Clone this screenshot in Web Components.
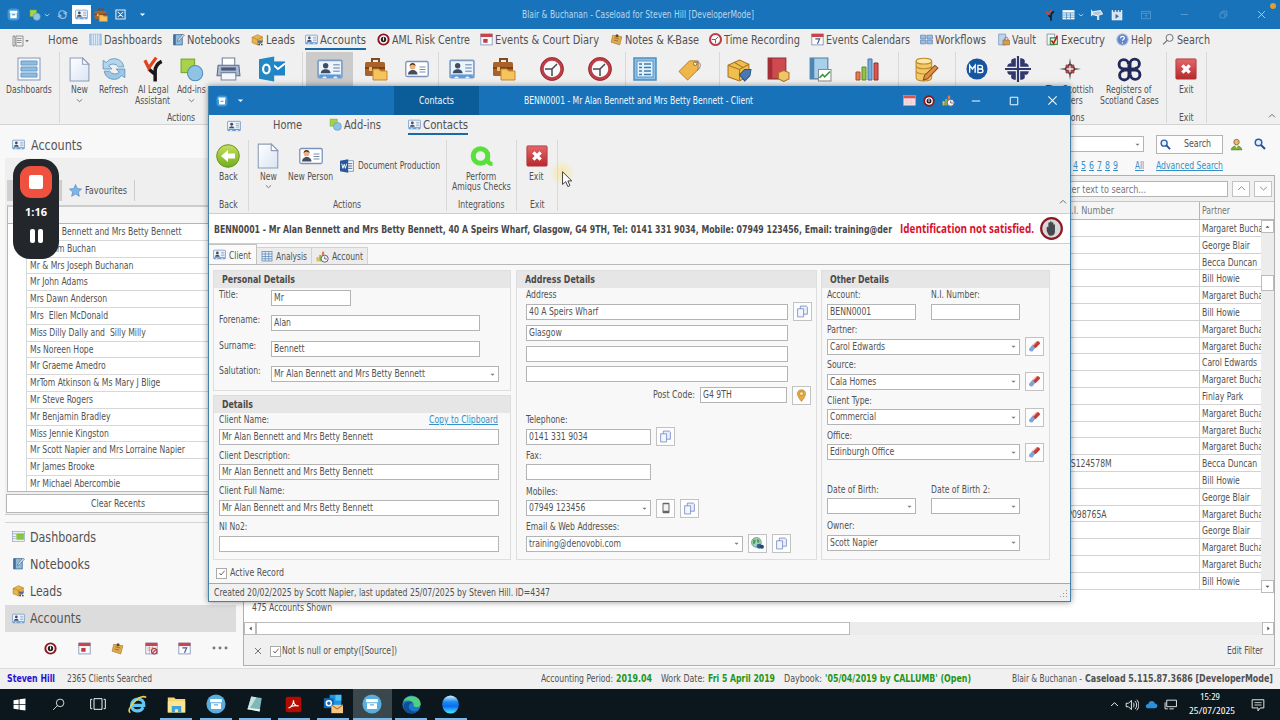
<!DOCTYPE html>
<html lang="en">
<head>
<meta charset="utf-8">
<title>Caseload</title>
<style>
    html, body {
        margin: 0;
        width: 1280px;
        height: 720px;
        overflow: hidden;
    }
    body {
        font-family: "DejaVu Sans Condensed", "DejaVu Sans", sans-serif;
        font-stretch: condensed;
        font-size: 10.2px;
        line-height: 12px;
        color: #525252;
    }
</style>
</head>
<body>
<case-desktop></case-desktop>

<script>
// ---------- icons, all on a 24x24 grid ----------
const card = '<rect x="1" y="4" width="22" height="16" rx="1" fill="#eef4fb" stroke="#7d9cc4" stroke-width="1.5"/><path d="M2 17h20v3H2z" fill="#5c9bd8"/><path d="M5 20.500c0-2 4-2 4 0M15 20.500c0-2 4-2 4 0" fill="#eef4fb"/><circle cx="8" cy="9" r="2.5" fill="#3f4d66"/><path d="M3.5 16c0-5 9-5 9 0z" fill="#3f4d66"/><path d="M15 8h6M15 11h6M15 14h6" stroke="#8ea5c4" stroke-width="1.4"/>';
const clock = '<circle cx="12" cy="12" r="10" fill="#f7f8fa" stroke="#bf3e47" stroke-width="3.4"/><circle cx="12" cy="12" r="11.4" fill="none" stroke="#8d2830" stroke-width=".8"/><path d="M12 12l5-5M12 12H5M12 12v7" stroke="#4a4a4a" stroke-width="1.5"/>';
const calendar = '<rect x="1.5" y="2" width="21" height="20" fill="#fbfbfd" stroke="#7f8fb5" stroke-width="1.5"/><path d="M1 1.500h22v6H1z" fill="#c8464b"/>';
const target = '<circle cx="12" cy="12" r="9.500" fill="#fff" stroke="#8f1620" stroke-width="3.600"/><circle cx="12" cy="12" r="5" fill="#222"/><path d="M12 8v6" stroke="#eee" stroke-width="2"/>';
const brief = '<path d="M8 5V2h7v3" fill="none" stroke="#7d4a24" stroke-width="2"/><rect x="1" y="5" width="20" height="14" rx="1.500" fill="#a9622a"/><path d="M1 11h20" stroke="#6b3a15" stroke-width="1.500"/><path d="M5 10h3v4H5z" fill="#e8c070"/><path d="M9 12h6l1.500 2H23v9H9z" fill="#f6c35c" stroke="#c8862c"/>';
const shapes = '<rect x="2" y="2" width="13" height="13" fill="#a8d24c" stroke="#74a428"/><circle cx="15.500" cy="15.500" r="7.300" fill="#8fc3e6" stroke="#4d8cb8"/>';
const app = '<rect x="1" y="1" width="22" height="22" rx="7" fill="#3d97d8"/><path d="M5 5h14v5H5z" fill="#fff"/><path d="M6 10h12v9H6z" fill="#fff"/><path d="M9 12.500h6" stroke="#2a86cc" stroke-width="1.800"/>';
const leads = '<path d="M2 8l10-5 9 4v10l-9 5-10-4z" fill="#e9b549" stroke="#a87420"/><path d="M2 8l10 4 9-5M12 12v9" fill="none" stroke="#a87420"/><path d="M12 14h10l-2 5h-6z" fill="#4d72a8"/><circle cx="15" cy="21.500" r="1.500" fill="#333"/><circle cx="20" cy="21.500" r="1.500" fill="#333"/>';
const notebook = '<path d="M3 3h16v19H3z" fill="#8dbcdc" stroke="#3c6c96" stroke-width="1.500"/><path d="M3 3h4v19H3z" fill="#3f6f9a"/><path d="M10 16l1-4 9-10 3 2-9 10z" fill="#cfdcea" stroke="#4b5a70"/>';
const pinnote = '<path d="M5 4l17 3-4 15-16-5z" fill="#e0ab4c" stroke="#9c6c24"/><path d="M8 9l9 2M7 13l8 2" stroke="#946628" stroke-width="1.500"/><circle cx="13" cy="5" r="2.800" fill="#6a4318"/>';
const exit = '<rect x="1" y="1" width="22" height="22" rx="1" fill="url(#red)" stroke="#b03a3c"/><path d="M8 8l8 8M16 8l-8 8" stroke="#fff" stroke-width="3.600"/>';
const page = '<path d="M3 1h12l6 6v16H3z" fill="url(#paper)" stroke="#8d9cb8"/><path d="M15 1v6h6z" fill="#fff" stroke="#8d9cb8"/>';
const person = '<rect x="0.800" y="4.500" width="22.400" height="15" rx="1.500" fill="#fff" stroke="#7a93bd" stroke-width="1.300"/><circle cx="7.500" cy="9.500" r="2.900" fill="#eeb27e"/><path d="M4.600 9c0-4 6-4 6 0-2-2-4-2-6 0z" fill="#503018"/><path d="M3 17.500c0-6 9.500-6 9.500 0z" fill="#444e60"/><path d="M14.500 10h6M14.500 12.500h6M14.500 15h6" stroke="#7b8da8"/>';
const lens = '<circle cx="9" cy="9" r="6.500" fill="#e8f1fb" stroke="#2b5fae" stroke-width="3"/><path d="M14 14l8 8" stroke="#214f9c" stroke-width="4"/>';

const ICONS = {
    card, clock, target, brief, shapes, app, leads, notebook, pinnote, exit, page, person, lens,
    diary: calendar + '<rect x="6" y="11" width="8" height="7" fill="#c03a44"/>',
    cal7: calendar + '<path d="M8 11h8l-4 9" fill="none" stroke="#4b5c80" stroke-width="2.200"/>',
    calplain: '<rect x="1" y="3" width="22" height="18" fill="#f7dfe0" stroke="#d8a0a4"/><path d="M1 3h22v5H1z" fill="#d95350"/><path d="M1 12.500h22M1 16.500h22M8 8v13M15 8v13" stroke="#e9c2c4"/>',
    calstop: calendar + '<path d="M4 11h16M4 15h16M8 8v13M14 8v13" stroke="#b86a70"/><circle cx="17" cy="17" r="5" fill="#f2dcdc" stroke="#a33640" stroke-width="2"/><path d="M14 20l6-6" stroke="#a33640" stroke-width="2"/>',
    back: '<circle cx="12" cy="12" r="11.300" fill="url(#green)" stroke="#6a9420"/><path d="M5 12l7-6v3.500h7v5h-7V18z" fill="#fff"/>',
    menu: '<path d="M2 2h4v20H2zM8 2h14v20H8z" fill="#eee" stroke="#777" stroke-width="1.500"/><path d="M10 7h9M10 11h9M10 15h9" stroke="#777" stroke-width="1.500"/>',
    cols: '<rect x="1.500" y="2" width="21" height="20" fill="#a9c8e8" stroke="#7ea1c8"/><path d="M6 2v20M10 2v20M14 2v20M18 2v20" stroke="#eef5fb" stroke-width="1.500"/>',
    dash: '<rect x="1" y="1" width="22" height="22" fill="#f5f7fa" stroke="#8797b3"/><path d="M4 4h16v4H4zM4 10h16v4H4zM4 16h16v4H4z" fill="#8fbbe0" stroke="#6b9cc8"/>',
    listblue: '<rect x="1" y="1" width="22" height="22" fill="#8cc0e6" stroke="#4e8fc0" stroke-width="1.500"/><rect x="4" y="4" width="16" height="16" fill="#e6f2fb" stroke="#5a98c8"/><path d="M6 7h3M6 10.500h3M6 14h3M6 17.500h3M11 7h7M11 10.500h7M11 14h7M11 17.500h7" stroke="#3f7cae" stroke-width="1.400"/>',
    refresh: '<path d="M3 14a9 9 0 0 0 16 4l3 2v-8h-8l3 3a6 6 0 0 1-9-1z" fill="#9cc7e6" stroke="#5b93bd" stroke-width=".8"/><path d="M21 10A9 9 0 0 0 5 6L2 4v8h8L7 9a6 6 0 0 1 9 1z" fill="#b3d6ee" stroke="#5b93bd" stroke-width=".8"/>',
    ai: '<path d="M20 5c-4 2-6 5-6 9v9.500M8 12l6 5" fill="none" stroke="#181818" stroke-width="3.200"/><path d="M4.500 4l3.500 7L15 1.500" fill="none" stroke="#e2431c" stroke-width="3"/>',
    printer: '<path d="M6 1h12v8H6z" fill="#fff" stroke="#6f7d98"/><path d="M2 8h20l1 10H1z" fill="#aab8d0" stroke="#5e6d8c"/><path d="M5 10h14v3H5z" fill="#4c5a78"/><path d="M5 15h14v7H5z" fill="#f4f7fb" stroke="#7887a2"/>',
    outlook: '<path d="M12 5h12v13H12z" fill="#1f83c8"/><path d="M13 8l4.500 4L24 7" fill="none" stroke="#fff" stroke-width="1.800"/><path d="M0 3l14-2.500v23L0 21z" fill="#2288c4"/><ellipse cx="6.800" cy="12" rx="3" ry="4" fill="none" stroke="#fff" stroke-width="2"/>',
    tag: '<path d="M1 14L12 3h9v9L10 23z" fill="#f0b64a" stroke="#b57a20"/><circle cx="18" cy="6" r="1.800" fill="#fff" stroke="#8c6424"/><path d="M18 5c6-3 7 5 2 8" fill="none" stroke="#777"/>',
    boxtag: '<path d="M1 8l11-5 9 4v11l-9 5-11-4z" fill="#f1bf4e" stroke="#a87420"/><path d="M1 8l11 4 9-5M12 12v10M7 5l8 5" fill="none" stroke="#a87420"/><path d="M12 17l5-5h6l-1 6-5 5z" fill="#4a78b4" stroke="#2e5688"/>',
    redbook: '<path d="M3 1h17v20H3z" fill="#cf4a50" stroke="#8f2a30"/><path d="M3 1h4v20H3z" fill="#a12f36"/><path d="M13 15l5-2 5 2v6l-5 2.500-5-2.500z" fill="#f2c46a" stroke="#a87420"/>',
    bluebook: '<path d="M3 1h17v20H3z" fill="#a9d0ea" stroke="#4a7ca4"/><path d="M3 1h4v20H3z" fill="#4a86b4"/><path d="M11 12h12v11H11z" fill="#fff" stroke="#888"/><path d="M12 20l3-3 2 2 5-5" fill="none" stroke="#3a9a3a" stroke-width="1.500"/>',
    chart: '<path d="M1 15h4v8H1z" fill="#e97a50" stroke="#b04a28"/><path d="M7 10h4v13H7z" fill="#8fc34a" stroke="#5c8a24"/><path d="M13 2h4v21h-4z" fill="#7aaede" stroke="#3f74a8"/><path d="M19 6h4v17h-4z" fill="#dc5450" stroke="#98302e"/>',
    db: '<path d="M2 4v16c0 4 15 4 15 0V4z" fill="#f3c866" stroke="#bb8a2c"/><ellipse cx="9.500" cy="4" rx="7.500" ry="2.800" fill="#fbe6a8" stroke="#bb8a2c"/><path d="M2 9c2 3 13 3 15 0M2 14c2 3 13 3 15 0" fill="none" stroke="#bb8a2c"/><path d="M9 22l1-4L20 8l3 2.500L13 21z" fill="#e09048" stroke="#8c4c1c"/>',
    mb: '<circle cx="12" cy="12" r="11.500" fill="#15569f"/><path d="M4 16V8l3 4 3-4v8M13 8v8h3.500a2 2 0 0 0 0-4H13h3a2 2 0 0 0 0-4z" fill="none" stroke="#fff" stroke-width="1.500"/>',
    cross: '<path d="M0 12h24M12 0v24" stroke="#32386e" stroke-width="2"/><g fill="#32386e"><path d="M10 10H2c0-3 3-4 4-3-1-3 0-5 4-5z"/><path d="M14 10h8c0-3-3-4-4-3 1-3 0-5-4-5z"/><path d="M10 14H2c0 3 3 4 4 3-1 3 0 5 4 5z"/><path d="M14 14h8c0 3-3 4-4 3 1 3 0 5-4 5z"/></g>',
    star8: '<path d="M12 1l1.300 9.700L23 12l-9.700 1.300L12 23l-1.300-9.700L1 12l9.700-1.300z" fill="#333"/><circle cx="12" cy="12" r="5" fill="#5c3436"/><path d="M8 8l8 8M16 8l-8 8" stroke="#b54548" stroke-width="2"/><path d="M12 8.500v7M8.500 12h7" stroke="#eee" stroke-width="1.300"/>',
    registers: '<g fill="none" stroke="#23285a" stroke-width="2.800"><path d="M11 7a4.500 4.500 0 1 0-4.500 4.500H17"/><path d="M17 11a4.500 4.500 0 1 0-4.500-4.500V17"/><path d="M13 17a4.500 4.500 0 1 0 4.500-4.500H7"/><path d="M7 13a4.500 4.500 0 1 0 4.500 4.500V7"/></g>',
    flow: '<path d="M1 4h10v7H1zM13 4h10v7H13zM1 13h10v7H1zM13 13h10v7H13z" fill="#9cbce0" stroke="#5f84b4" stroke-width="1.300"/>',
    vault: '<path d="M3 2h13v20H3z" fill="#bcd4ea" stroke="#6f93b8" stroke-width="1.300"/><rect x="11" y="13" width="12" height="9" fill="#d99a58" stroke="#8c5c28"/><path d="M14 13v-3c0-3 6-3 6 0v3" fill="none" stroke="#8c7050" stroke-width="1.600"/>',
    execu: '<path d="M2 2h14v20H2z" fill="#f3f7fa" stroke="#6d8090" stroke-width="1.400"/><path d="M8 9h13v12H8z" fill="#e6f3e2" stroke="#3d8a3d" stroke-width="2"/><path d="M10 14l4 5 7-14" fill="none" stroke="#b02028" stroke-width="3"/>',
    help: '<circle cx="12" cy="12" r="10.500" fill="#5f86cc" stroke="#b8c6de" stroke-width="2"/><path d="M8.500 9.500c0-5 7-4 7-.5 0 2.500-3.500 2.500-3.500 5.500M12 17v2.500" fill="none" stroke="#fff" stroke-width="2.200"/>',
    find: '<circle cx="14" cy="9" r="6.500" fill="none" stroke="#666" stroke-width="1.700"/><path d="M9.500 13.500L2 21" stroke="#666" stroke-width="2"/>',
    findw: '<circle cx="15" cy="9" r="7" fill="none" stroke="#fff" stroke-width="1.500"/><path d="M10 14l-8 8" stroke="#fff" stroke-width="1.500"/>',
    fav: '<path d="M12 1l3.300 7.500 8 .8-6 5.400 1.800 8L12 18.600 4.900 22.700l1.800-8-6-5.400 8-.8z" fill="#7fb6e6" stroke="#3d78b4"/>',
    greendash: '<rect x="1" y="3" width="22" height="18" fill="#eef3f8" stroke="#7a8ca8"/><path d="M8 7h14v11H8z" fill="#8ac53f"/><path d="M1 7h22M1 12h6M1 16h6" stroke="#7a8ca8"/>',
    user: '<circle cx="12" cy="7.500" r="5" fill="#edb77c" stroke="#8c5c24" stroke-width="1.500"/><path d="M2 22c1-10 19-10 20 0z" fill="#78b034" stroke="#4c7c1c"/><path d="M9 14l3 5 3-5z" fill="#eee"/>',
    word: '<path d="M10 3h13v18H10z" fill="#fff" stroke="#2b5797"/><path d="M14 8h7M14 12h7M14 16h7" stroke="#2b5797" stroke-width="1.500"/><path d="M0 3l14-2.500v23L0 21z" fill="#2b579a"/><path d="M3 8l2 8 2.200-7L9.300 16l2-8" fill="none" stroke="#fff" stroke-width="1.600"/>',
    amiqus: '<circle cx="10.500" cy="12" r="7.300" fill="none" stroke="#58e03c" stroke-width="5"/><path d="M18 8v8c0 3 2 4 4.500 4" fill="none" stroke="#58e03c" stroke-width="4"/>',
    hand: '<circle cx="12" cy="12" r="10.800" fill="#d6d8da" stroke="#8c1822" stroke-width="2.300"/><path d="M7 11c0-1 1.500-1 1.700 0V6.500c0-1.300 1.700-1.300 1.700 0V5.300c0-1.300 1.800-1.300 1.800 0v1.200c0-1.300 1.800-1.300 1.800 0v2c0-1.200 1.600-1.200 1.600 0V15c0 3-2 4.500-4 4.500-3 0-3-2-4.600-5z" fill="#45484c"/>',
    sheet: '<rect x="2" y="3" width="20" height="19" fill="#e8f1fb" stroke="#5d86ba" stroke-width="1.500"/><path d="M2 8h20M2 13h20M2 17.500h20M8.500 3v19M15.500 3v19" stroke="#5d86ba" stroke-width="1.500"/>',
    acclock: '<path d="M1 13h4v8H1z" fill="#e2b93c"/><path d="M6 9h4v12H6z" fill="#8aba42"/><path d="M11 3h4v18h-4z" fill="#e27c50"/><circle cx="16" cy="16" r="6.500" fill="#f4f4fa" stroke="#6c5a86" stroke-width="1.800"/><path d="M16 12v4.500h4" fill="none" stroke="#555" stroke-width="1.500"/>',
    copy: '<path d="M8 2h11l2 2v13H8z" fill="#e9effc" stroke="#7489c4" stroke-width="1.500"/><path d="M3 7h11v15H3z" fill="#f2f6ff" stroke="#7489c4" stroke-width="1.500"/>',
    pin: '<path d="M12 23C4 13 4 9 5 6c2-6 12-6 14 0 1 3 1 7-7 17z" fill="#e9a93c" stroke="#a06c1c"/><circle cx="12" cy="8.500" r="3.500" fill="#f9e6b8" stroke="#a06c1c"/>',
    phone: '<rect x="5" y="1.500" width="14" height="21" rx="2" fill="#666"/><rect x="7" y="4.500" width="10" height="13" fill="#f3f3f3"/>',
    globe: '<circle cx="10" cy="10" r="9" fill="#9fd0c0" stroke="#4a8a78" stroke-width="1.300"/><path d="M4 6c5-4 6 3 3 6s-4 1-3-6zM11 4c4 0 6 4 4 6s-5-1-4-6z" fill="#4fa046"/><circle cx="15" cy="17" r="4.500" fill="#365c94"/><circle cx="20" cy="18" r="3.800" fill="#26446c"/>',
    eraser: '<path d="M2 16L8 9l6 5-6 7c-4 1-7-2-6-5z" fill="#7fa4d8"/><path d="M8 9l8-7c3-1 7 2 6 5l-8 8z" fill="#c63a34"/><path d="M8 9l8-7 2 0-8 8z" fill="#f2cfc8"/>',
    down: '<path d="M5 9h14l-7 7z" fill="currentColor"/>',
    up: '<path d="M5 16h14l-7-7z" fill="currentColor"/>',
    left: '<path d="M16 5v14l-8-7z" fill="currentColor"/>',
    right: '<path d="M8 5v14l8-7z" fill="currentColor"/>',
    vee: '<path d="M3 8l9 8 9-8" fill="none" stroke="currentColor" stroke-width="2.500"/>',
    hat: '<path d="M3 16l9-9 9 9" fill="none" stroke="currentColor" stroke-width="2.500"/>',
    min: '<path d="M2 12h20" stroke="currentColor" stroke-width="2.400"/>',
    max: '<path d="M3 3h18v18H3z" fill="none" stroke="currentColor" stroke-width="2.400"/>',
    restore: '<path d="M3 8h13v13H3zM8 8V3h13v13h-5" fill="none" stroke="currentColor" stroke-width="2"/>',
    close: '<path d="M3 3l18 18M21 3L3 21" stroke="currentColor" stroke-width="2.400"/>',
    tick: '<path d="M4 12l5 6L20 5" fill="none" stroke="currentColor" stroke-width="2.600"/>',
    xbox: '<path d="M2 2h20v20H2zM6 6l12 12M18 6L6 18" fill="none" stroke="#e8f2fa" stroke-width="2.300"/>',
    sync: '<path d="M4 13c-1-12 14-11 15-4M20 11c1 12-13 12-15 4M22 7l-4 4-4-3M2 17l4-4 4 3" fill="none" stroke="#9ec4e4" stroke-width="2.400"/>',
    tablew: '<rect x="1" y="4" width="22" height="17" fill="#fff"/><path d="M1 9h22M1 13h22M1 17h22M8.500 9v12M15.500 9v12" stroke="#4486bc" stroke-width="1.500"/>',
    horn: '<path d="M3 3v12M5 7l14-2 4 6-10 3-8-2z" fill="#b8c4d0" stroke="#e8eef4" stroke-width="2"/><path d="M13 14v8h4v-9z" fill="#d5dde6"/>',
    clip: '<rect x="2" y="3" width="20" height="19" fill="#d4e4f2" stroke="#fff"/><path d="M6 1v5M12 1v5M18 1v5" stroke="#25507c" stroke-width="2.500"/><path d="M9 10l7 4.500-7 5z" fill="#3c6fa0"/>',
    ribopt: '<rect x="1.500" y="3" width="21" height="18" fill="none" stroke="currentColor" stroke-width="1.800"/><path d="M2 8h20M12 18v-6M9 14.500l3-3 3 3" fill="none" stroke="currentColor" stroke-width="1.800"/>',
    win: '<path d="M1 4l9.500-1.400V11H1zM12 2.400L23 1v10H12zM1 12.500h9.500V21L1 19.700zM12 12.500h11V23l-11-1.500z" fill="#fff"/>',
    taskview: '<path d="M6 4h12v16H6zM3.500 5H1v14h2.500M20.500 5H23v14h-2.500" fill="none" stroke="#fff" stroke-width="1.400"/>',
    ie: '<path d="M4.500 13h15.500c1-10-15-11-15.500 0 0 9 12 9 14.500 2.500" fill="none" stroke="#62c6f2" stroke-width="4"/><path d="M3 22C-4 20 14-2 23 3" fill="none" stroke="#f2cf4a" stroke-width="2"/>',
    folder: '<path d="M1 3h8l2 2h12v17H1z" fill="#f7d774"/><path d="M1 8h22v14H1z" fill="#fce694"/><path d="M6 22v-8h12v8h-4v-4h-4v4z" fill="#3fa2d8"/>',
    caseround: '<circle cx="12" cy="12" r="11.500" fill="#5aaede"/><path d="M5 6h14v4H5zM6 11h12v7H6z" fill="#fff"/><path d="M9.500 13h5" stroke="#5aaede" stroke-width="1.400"/>',
    eraserpad: '<path d="M7 2l14 2-3 18-16-3z" fill="#7eb8b8"/><path d="M7 2l7 1-9 15-3 1z" fill="#c6e4e2"/><path d="M2 19l16 3 1-3-16-2z" fill="#e9f2f0"/>',
    pdf: '<rect x="1" y="1" width="22" height="22" rx="3" fill="#b30b00"/><path d="M5 17c4-1 7-6 7-11 0 5 3 9 7 8-5-1-10 0-14 3z" fill="none" stroke="#fff" stroke-width="1.600"/>',
    outmail: '<path d="M8 1h14v15H8z" fill="#1d94e0"/><path d="M15 1h7v7h-7z" fill="#4cc0f4"/><rect x="1" y="5" width="12" height="12" fill="#1268b4"/><circle cx="7" cy="11" r="3" fill="none" stroke="#fff" stroke-width="1.800"/><path d="M10 13h14v10H10z" fill="#f6c682"/><path d="M10 13l7 5 7-5" fill="none" stroke="#b57c34" stroke-width="1.300"/>',
    edge: '<circle cx="12" cy="12" r="11.500" fill="#1b78c8"/><path d="M2 8C6-2 24 0 23.500 12c-1 5-9 4-9 1 2-5-7-8-12.500-5z" fill="#52cf7c"/><path d="M9 13c-2 5 4 10 11 7-5 6-18 4-18-6 0-5 7-7 11-4-2 0-3.500 1-4 3z" fill="#0d4f98"/>',
    orb: '<ellipse cx="12" cy="12" rx="10.500" ry="11.500" fill="url(#orb)"/>',
    speaker: '<path d="M2 9h4l5-5v16l-5-5H2z" fill="none" stroke="#fff" stroke-width="1.500"/><path d="M14 8c2 2 2 6 0 8M17 5c4 4 4 10 0 14M20 3c5 5 5 13 0 18" fill="none" stroke="#fff" stroke-width="1.500"/>',
    cloud: '<path d="M6 19c-6 0-6-8 0-8 1-7 11-7 12-1 6 0 7 9 0 9z" fill="#2c8fdc"/>',
    screen: '<path d="M5 4h18v12H5zM10 20h8M2 8v12h5" fill="none" stroke="#fff" stroke-width="1.600"/>',
    chat: '<path d="M2 3h20v14h-6l-4 5v-5H2z" fill="none" stroke="#fff" stroke-width="1.500"/><path d="M6 8h12M6 12h12" stroke="#fff" stroke-width="1.300"/>',
    dots: '<g fill="#777"><circle cx="3" cy="12" r="2.200"/><circle cx="12" cy="12" r="2.200"/><circle cx="21" cy="12" r="2.200"/></g>',
    grip: '<path d="M20 6h2v2h-2zM14 12h2v2h-2zM20 12h2v2h-2zM8 18h2v2H8zM14 18h2v2h-2zM20 18h2v2h-2z" fill="#999"/>',
    cursor: '<path d="M5 1v18l4.500-4 3 7 3-1.400-3-6.600H18z" fill="#fff" stroke="#333" stroke-width="1.300"/>'
};

class CaseIcon extends HTMLElement {
    constructor() {
        super();
        this.attachShadow({ mode: 'open' });
    }

    connectedCallback() {
        const size = this.getAttribute('size') || '13';
        this.shadowRoot.innerHTML = `
            <style>
                :host {
                    display: inline-block;
                    flex: none;
                    width: ${size}px;
                    height: ${size}px;
                }
                svg { display: block; }
            </style>
            <svg width="${size}" height="${size}" viewBox="0 0 24 24">
                <defs>
                    <linearGradient id="red" x2="0" y2="1"><stop stop-color="#e2686a"/><stop offset="1" stop-color="#b8282c"/></linearGradient>
                    <linearGradient id="paper" x2="1" y2="1"><stop stop-color="#fff"/><stop offset="1" stop-color="#d9e4f4"/></linearGradient>
                    <linearGradient id="green" x2="0" y2="1"><stop stop-color="#c8e060"/><stop offset="1" stop-color="#6fae1c"/></linearGradient>
                    <linearGradient id="orb" x2="0" y2="1"><stop stop-color="#d8f4ff"/><stop offset=".35" stop-color="#1e8cf0"/><stop offset=".6" stop-color="#0a6cf0"/><stop offset="1" stop-color="#4ff0ff"/></linearGradient>
                </defs>
                ${ICONS[this.getAttribute('name')] || ''}
            </svg>
        `;
    }
}
customElements.define('case-icon', CaseIcon);

// Text squeezed to a given width (w), or by the usual ratio
class CaseText extends HTMLElement {
    constructor() {
        super();
        this.attachShadow({ mode: 'open' });
        this.shadowRoot.innerHTML = `
            <style>
                :host {
                    display: inline-block;
                    flex: none;
                    vertical-align: top;
                    white-space: nowrap;
                }
                span {
                    display: inline-block;
                    vertical-align: top;
                    white-space: pre;
                    text-decoration: inherit;
                    transform-origin: 0 50%;
                }
            </style>
            <span><slot></slot></span>
        `;
    }

    connectedCallback() {
        const span = this.shadowRoot.querySelector('span');
        const natural = span.getBoundingClientRect().width;
        if (!natural) return;
        const w = Number(this.getAttribute('w')) || natural * 0.84;
        this.style.width = w + 'px';
        span.style.transform = `scaleX(${w / natural})`;
    }
}
customElements.define('case-text', CaseText);

class RibbonTab extends HTMLElement {
    constructor() {
        super();
        this.attachShadow({ mode: 'open' });
    }

    connectedCallback() {
        const icon = this.getAttribute('icon');
        const active = this.hasAttribute('active');
        this.shadowRoot.innerHTML = `
            <style>
                :host {
                    display: flex;
                    flex: none;
                    align-items: center;
                    gap: 2px;
                    height: 17px;
                    font-size: 12px;
                    border-bottom: 2px solid ${active ? '#1b6aa8' : 'transparent'};
                }
            </style>
            ${icon ? `<case-icon name="${icon}" size="13"></case-icon>` : ''}
            <case-text w="${this.getAttribute('w')}">${this.getAttribute('label')}</case-text>
        `;
    }
}
customElements.define('ribbon-tab', RibbonTab);

class RibbonButton extends HTMLElement {
    constructor() {
        super();
        this.attachShadow({ mode: 'open' });
    }

    connectedCallback() {
        const lines = (this.getAttribute('label') || '').split('|');
        this.shadowRoot.innerHTML = `
            <style>
                :host {
                    display: flex;
                    flex: none;
                    flex-direction: column;
                    align-items: center;
                    width: ${this.getAttribute('width')}px;
                    height: 54px;
                    padding-top: 4px;
                    line-height: 10.500px;
                    background: ${this.hasAttribute('active') ? '#cbcbcb' : 'transparent'};
                }
                .icon {
                    display: flex;
                    align-items: center;
                    height: 26px;
                    margin-bottom: 3px;
                }
                .drop { margin-top: 1px; }
            </style>
            <div class="icon"><case-icon name="${this.getAttribute('icon')}" size="${this.getAttribute('size') || 26}"></case-icon></div>
            ${lines.map(line => `<case-text>${line}</case-text>`).join('')}
            ${this.hasAttribute('drop') ? '<case-icon class="drop" name="vee" size="7"></case-icon>' : ''}
        `;
    }
}
customElements.define('ribbon-button', RibbonButton);

class RibbonGroup extends HTMLElement {
    constructor() {
        super();
        this.attachShadow({ mode: 'open' });
    }

    connectedCallback() {
        this.shadowRoot.innerHTML = `
            <style>
                :host {
                    display: flex;
                    flex: none;
                    flex-direction: column;
                    box-sizing: border-box;
                    width: ${this.getAttribute('width')}px;
                    height: 71px;
                    border-right: 1px solid #d9d9d9;
                }
                .buttons { display: flex; height: 59px; }
                .caption { text-align: center; line-height: 15px; }
            </style>
            <div class="buttons"><slot></slot></div>
            <div class="caption"><case-text>${this.getAttribute('caption') || ''}</case-text></div>
        `;
    }
}
customElements.define('ribbon-group', RibbonGroup);

class TextField extends HTMLElement {
    constructor() {
        super();
        this.attachShadow({ mode: 'open' });
    }

    connectedCallback() {
        const value = this.getAttribute('value') || '';
        this.shadowRoot.innerHTML = `
            <style>
                :host {
                    display: flex;
                    flex: none;
                    align-items: center;
                    justify-content: space-between;
                    box-sizing: border-box;
                    width: ${this.getAttribute('width')}px;
                    height: 16px;
                    padding: 0 2px;
                    background: #fff;
                    border: 1px solid #b4b4b4;
                }
                case-icon { color: #777; }
            </style>
            <case-text ${this.hasAttribute('w') ? `w="${this.getAttribute('w')}"` : ''}>${value}</case-text>
            ${this.hasAttribute('combo') ? '<case-icon name="down" size="7"></case-icon>' : ''}
        `;
    }
}
customElements.define('text-field', TextField);

class IconButton extends HTMLElement {
    constructor() {
        super();
        this.attachShadow({ mode: 'open' });
    }

    connectedCallback() {
        this.shadowRoot.innerHTML = `
            <style>
                :host {
                    display: flex;
                    flex: none;
                    align-items: center;
                    justify-content: center;
                    box-sizing: border-box;
                    width: 19px;
                    height: 19px;
                    background: #fdfdfd;
                    border: 1px solid #c2c2c2;
                }
            </style>
            <case-icon name="${this.getAttribute('icon')}" size="${this.getAttribute('size') || 13}"></case-icon>
        `;
    }
}
customElements.define('icon-button', IconButton);

// A label over a row of fields and buttons
class FormRow extends HTMLElement {
    constructor() {
        super();
        this.attachShadow({ mode: 'open' });
    }

    connectedCallback() {
        const height = this.getAttribute('height') || 35.7;
        this.shadowRoot.innerHTML = `
            <style>
                :host {
                    display: block;
                    height: ${height}px;
                }
                .label { height: 14px; line-height: 14px; }
                .fields {
                    display: flex;
                    align-items: center;
                    gap: 5px;
                    height: 19px;
                }
            </style>
            <div class="label"><case-text>${this.getAttribute('label')}</case-text></div>
            <div class="fields"><slot></slot></div>
        `;
    }
}
customElements.define('form-row', FormRow);

class GroupBox extends HTMLElement {
    constructor() {
        super();
        this.attachShadow({ mode: 'open' });
    }

    connectedCallback() {
        this.shadowRoot.innerHTML = `
            <style>
                :host {
                    display: block;
                    box-sizing: border-box;
                    height: ${this.getAttribute('height')}px;
                    border: 1px solid #dedede;
                }
                h3 {
                    margin: 0;
                    padding-left: 8px;
                    height: 17px;
                    font-size: 11px;
                    line-height: 17px;
                    background: #e6e6e6;
                    color: #4a4a4a;
                }
                .body { padding: 0 5px; }
            </style>
            <h3><case-text w="${this.getAttribute('w')}">${this.getAttribute('heading')}</case-text></h3>
            <div class="body"><slot></slot></div>
        `;
    }
}
customElements.define('group-box', GroupBox);

class ClientWindow extends HTMLElement {
    constructor() {
        super();
        this.attachShadow({ mode: 'open' });
    }

    connectedCallback() {
        this.shadowRoot.innerHTML = `
            <style>
                :host {
                    display: flex;
                    flex-direction: column;
                    box-sizing: border-box;
                    width: 863px;
                    height: 516px;
                    border: 1px solid #4482ac;
                    border-top: 0;
                    background: #f8f8f8;
                    box-shadow: 0 0 6px rgba(0, 0, 0, .45);
                }
                .title {
                    display: flex;
                    align-items: center;
                    height: 29px;
                    background: #1872b9;
                    color: #f4f8fc;
                    box-sizing: border-box;
                }
                .context {
                    width: 85px;
                    height: 29px;
                    margin-left: 149px;
                    line-height: 29px;
                    text-align: center;
                    background: #0a5d99;
                }
                .tabs { display: flex; background: #f0f0f0; height: 24px; }
                .tabs ribbon-tab { margin: 1px 0 0 27px; }
                .ribbon { display: flex; background: #f0f0f0; height: 74px; padding-top: 1px; box-sizing: border-box; }
                .ribbon ribbon-button { margin-top: -1.500px; }
                .doc { display: flex; align-items: center; gap: 4px; margin: 19px 0 0 5px; height: 14px; }
                .collapse { margin: 58px 3px 0 auto; }
                .summary {
                    display: flex;
                    align-items: center;
                    height: 31px;
                    padding-left: 5px;
                    background: #fff;
                    border-top: 1px solid #cfcfcf;
                    border-bottom: 1px solid #cfcfcf;
                    font-weight: bold;
                    font-size: 10.500px;
                    color: #484848;
                    box-sizing: border-box;
                }
                .warn { font: bold 11.500px/14px "Open Sans", sans-serif; color: #d8102c; margin: 0 6px 0 8px; }
                .pages {
                    display: flex;
                    align-items: flex-end;
                    height: 21px;
                    border-bottom: 1px solid #b8b8b8;
                    box-sizing: border-box;
                }
                .pages div {
                    display: flex;
                    align-items: center;
                    gap: 3px;
                    box-sizing: border-box;
                    height: 17px;
                    padding-left: 4px;
                    background: #ececec;
                    border: 1px solid #d2d2d2;
                    border-bottom: 0;
                    border-left: 0;
                    font-size: 10.500px;
                }
                .pages .on { height: 20px; background: #fafafa; border-color: #c2c2c2; }
                .body {
                    display: grid;
                    grid-template-columns: 298px 301px 228px;
                    column-gap: 5px;
                    height: 290px;
                    padding: 5px 0 0 4px;
                }
                .body > :nth-child(3) { margin-left: -1px; }
                .left { display: flex; flex-direction: column; justify-content: space-between; }
                .field { display: flex; height: 25.500px; }
                .labelcell { width: 52px; line-height: 12px; margin-top: -1px; }
                .address { display: flex; align-items: center; height: 20.800px; gap: 5px; }
                .post { justify-content: flex-end; }
                .copy { float: right; color: #3591c8; text-decoration: underline; margin-right: 7px; line-height: 14px; }
                .pair { display: grid; grid-template-columns: 104px 104px; }
                .active { display: flex; align-items: center; gap: 3px; padding: 7px 0 0 7px; height: 12px; }
                .check {
                    display: flex;
                    align-items: center;
                    justify-content: center;
                    width: 9px;
                    height: 9px;
                    border: 1px solid #aaa;
                    background: #fff;
                }
                .status {
                    display: flex;
                    align-items: center;
                    justify-content: space-between;
                    margin-top: auto;
                    height: 17px;
                    padding: 0 2px 0 5px;
                    border-top: 1px solid #a8a8a8;
                    background: #f0f0f0;
                }
            </style>
            <div class="title">
                <case-icon name="app" size="12" style="margin-left:7px"></case-icon>
                <case-icon name="down" size="9" style="margin-left:8px"></case-icon>
                <div class="context"><case-text w="35">Contacts</case-text></div>
                <case-text w="229" style="margin-left:45px">BENN0001 - Mr Alan Bennett and Mrs Betty Bennett - Client</case-text>
                <case-icon name="calplain" size="13" style="margin-left:150px"></case-icon>
                <case-icon name="target" size="12" style="margin-left:7px"></case-icon>
                <case-icon name="acclock" size="13" style="margin-left:7px"></case-icon>
                <case-icon name="min" size="10" style="margin-left:16px"></case-icon>
                <case-icon name="max" size="10" style="margin-left:28px"></case-icon>
                <case-icon name="close" size="11" style="margin-left:28px"></case-icon>
            </div>
            <div class="tabs">
                <case-icon name="card" size="14" style="margin:4px 5px 0 18px"></case-icon>
                <ribbon-tab label="Home" w="29"></ribbon-tab>
                <ribbon-tab icon="shapes" label="Add-ins" w="37"></ribbon-tab>
                <ribbon-tab icon="card" label="Contacts" w="45" active></ribbon-tab>
            </div>
            <div class="ribbon">
                <ribbon-group width="40" caption="Back">
                    <ribbon-button icon="back" size="24" width="38" label="Back"></ribbon-button>
                </ribbon-group>
                <ribbon-group width="198" caption="Actions">
                    <ribbon-button icon="page" width="38" label="New" drop></ribbon-button>
                    <ribbon-button icon="person" size="24" width="48" label="New Person"></ribbon-button>
                    <div class="doc"><case-icon name="word" size="14"></case-icon><case-text w="82">Document Production</case-text></div>
                </ribbon-group>
                <ribbon-group width="70" caption="Integrations">
                    <ribbon-button icon="amiqus" size="24" width="69" label="Perform|Amiqus Checks"></ribbon-button>
                </ribbon-group>
                <ribbon-group width="41" caption="Exit">
                    <ribbon-button icon="exit" size="22" width="39" label="Exit"></ribbon-button>
                </ribbon-group>
                <case-icon class="collapse" name="hat" size="8"></case-icon>
            </div>
            <div class="summary">
                <case-text w="678">BENN0001 - Mr Alan Bennett and Mrs Betty Bennett, 40 A Speirs Wharf, Glasgow, G4 9TH, Tel: 0141 331 9034, Mobile: 07949 123456, Email: training@der</case-text>
                <case-text class="warn" w="134">Identification not satisfied.</case-text>
                <case-icon name="hand" size="23"></case-icon>
            </div>
            <div class="pages">
                <div class="on" style="width:48px"><case-icon name="card"></case-icon><case-text w="22">Client</case-text></div>
                <div style="width:55px"><case-icon name="sheet" size="12"></case-icon><case-text w="31">Analysis</case-text></div>
                <div style="width:56px"><case-icon name="acclock"></case-icon><case-text w="31">Account</case-text></div>
            </div>
            <div class="body">
                <div class="left">
                    <group-box heading="Personal Details" w="73" height="121">
                        <div class="field" style="margin-top:1.5px"><div class="labelcell"><case-text>Title:</case-text></div><text-field value="Mr" width="80"></text-field></div>
                        <div class="field"><div class="labelcell"><case-text>Forename:</case-text></div><text-field value="Alan" width="209"></text-field></div>
                        <div class="field"><div class="labelcell"><case-text>Surname:</case-text></div><text-field value="Bennett" width="209"></text-field></div>
                        <div class="field"><div class="labelcell"><case-text>Salutation:</case-text></div><text-field value="Mr Alan Bennett and Mrs Betty Bennett" w="151" width="228" combo></text-field></div>
                    </group-box>
                    <group-box heading="Details" w="31" height="165">
                        <case-text class="copy" w="69">Copy to Clipboard</case-text>
                        <form-row label="Client Name:"><text-field value="Mr Alan Bennett and Mrs Betty Bennett" w="151" width="280"></text-field></form-row>
                        <form-row label="Client Description:"><text-field value="Mr Alan Bennett and Mrs Betty Bennett" w="151" width="280"></text-field></form-row>
                        <form-row label="Client Full Name:"><text-field value="Mr Alan Bennett and Mrs Betty Bennett" w="151" width="280"></text-field></form-row>
                        <form-row label="NI No2:"><text-field width="280"></text-field></form-row>
                    </group-box>
                </div>
                <group-box heading="Address Details" w="70" height="290">
                    <div style="padding-left:4px">
                        <form-row label="Address" height="34.5"><text-field value="40 A Speirs Wharf" width="262"></text-field><icon-button icon="copy"></icon-button></form-row>
                        <div class="address"><text-field value="Glasgow" width="262"></text-field></div>
                        <div class="address"><text-field width="262"></text-field></div>
                        <div class="address"><text-field width="262"></text-field></div>
                        <div class="address post"><case-text w="42">Post Code:</case-text><text-field value="G4 9TH" width="87"></text-field><icon-button icon="pin"></icon-button></div>
                        <form-row label="Telephone:" style="margin-top:7.5px"><text-field value="0141 331 9034" width="125"></text-field><icon-button icon="copy"></icon-button></form-row>
                        <form-row label="Fax:"><text-field width="125"></text-field></form-row>
                        <form-row label="Mobiles:" height="35.5"><text-field value="07949 123456" width="125" combo></text-field><icon-button icon="phone" size="12"></icon-button><icon-button icon="copy"></icon-button></form-row>
                        <form-row label="Email &amp; Web Addresses:"><text-field value="training@denovobi.com" width="217" combo></text-field><icon-button icon="globe"></icon-button><icon-button icon="copy"></icon-button></form-row>
                    </div>
                </group-box>
                <group-box heading="Other Details" w="59" height="290">
                    <div class="pair">
                        <form-row label="Account:" height="35.2"><text-field value="BENN0001" width="89"></text-field></form-row>
                        <form-row label="N.I. Number:" height="35.2"><text-field width="89"></text-field></form-row>
                    </div>
                    <form-row label="Partner:" height="35.2"><text-field value="Carol Edwards" width="193" combo></text-field><icon-button icon="eraser"></icon-button></form-row>
                    <form-row label="Source:" height="35.2"><text-field value="Cala Homes" width="193" combo></text-field><icon-button icon="eraser"></icon-button></form-row>
                    <form-row label="Client Type:" height="35.2"><text-field value="Commercial" width="193" combo></text-field><icon-button icon="eraser"></icon-button></form-row>
                    <form-row label="Office:" height="54"><text-field value="Edinburgh Office" width="193" combo></text-field><icon-button icon="eraser"></icon-button></form-row>
                    <div class="pair">
                        <form-row label="Date of Birth:" height="36.3"><text-field width="89" combo></text-field></form-row>
                        <form-row label="Date of Birth 2:" height="36.3"><text-field width="89" combo></text-field></form-row>
                    </div>
                    <form-row label="Owner:"><text-field value="Scott Napier" width="193" combo></text-field></form-row>
                </group-box>
            </div>
            <div class="active"><div class="check"><case-icon name="tick" size="8"></case-icon></div><case-text w="54">Active Record</case-text></div>
            <div class="status">
                <case-text w="336">Created 20/02/2025 by Scott Napier, last updated 25/07/2025 by Steven Hill. ID=4347</case-text>
                <case-icon name="grip" size="12"></case-icon>
            </div>
        `;
    }
}
customElements.define('client-window', ClientWindow);

class SidePanel extends HTMLElement {
    constructor() {
        super();
        this.attachShadow({ mode: 'open' });
    }

    connectedCallback() {
        const recents = ['Mr Alan Bennett and Mrs Betty Bennett', 'Mr Adam Buchan', 'Mr &amp; Mrs Joseph Buchanan', 'Mr John Adams',
            'Mrs Dawn Anderson', 'Mrs  Ellen McDonald', 'Miss Dilly Dally and  Silly Milly', 'Ms Noreen Hope', 'Mr Graeme Amedro',
            'MrTom Atkinson &amp; Ms Mary J Blige', 'Mr Steve Rogers', 'Mr Benjamin Bradley', 'Miss Jennie Kingston',
            'Mr Scott Napier and Mrs Lorraine Napier', 'Mr James Brooke', 'Mr Michael Abercombie'];
        const nav = [['greendash', 'Dashboards', 66], ['notebook', 'Notebooks', 60], ['leads', 'Leads', 32], ['card', 'Accounts', 51]];

        this.shadowRoot.innerHTML = `
            <style>
                :host {
                    display: block;
                    box-sizing: border-box;
                    width: 243px;
                    height: 543px;
                    padding: 0 8px 0 5px;
                    background: #f8f8f8;
                }
                .head { display: flex; align-items: center; gap: 6px; height: 33px; padding: 6px 0 0 7px; font-size: 14px; line-height: 18px; box-sizing: border-box; }
                .frame { background: #efefef; height: 357px; padding: 0 1px 0 2px; box-sizing: border-box; border-bottom: 1px solid #ccc; }
                .tabs { display: flex; padding-top: 22px; height: 21px; margin-bottom: 4px; }
                .tabs div { display: flex; align-items: center; gap: 3px; border-right: 1px solid #ccc; }
                .recent { width: 54px; background: #d0d0d0; }
                .fav { padding: 0 7px 0 7px; }
                .table { border: 1px solid #b8b8b8; background: #fff; height: 287px; overflow: hidden; box-sizing: border-box; border-top: 2px solid #ccc; }
                .th { height: 16px; background: #f6f6f6; border-bottom: 1px solid #b5b5b5; }
                .row { box-sizing: border-box; height: 16.800px; margin-left: 18px; padding-left: 3px; line-height: 16px; border-bottom: 1px solid #d8d8d8; border-left: 1px solid #d8d8d8; }
                .clear { background: #fff; border: 1px solid #b8b8b8; margin: 2px -1px 0; height: 17px; line-height: 18px; text-align: center; }
                .clear case-text { margin-right: 5px; }
                hr { margin: 7px 0 0; border: 0; border-top: 1px solid #d5d5d5; }
                .nav div { display: flex; align-items: center; gap: 5px; height: 27.200px; padding-left: 7px; font-size: 14.500px; line-height: 18px; margin-right: -1px; }
                .nav .on { background: #dcdcdc; }
                .tools { display: flex; gap: 20.500px; padding: 10px 0 0 39px; }
            </style>
            <div class="head"><case-icon name="card"></case-icon><case-text w="51">Accounts</case-text></div>
            <div class="frame">
                <div class="tabs"><div class="recent"></div><div class="fav"><case-icon name="fav"></case-icon><case-text w="42">Favourites</case-text></div></div>
                <div class="table"><div class="th"></div>${recents.map(name => `<div class="row"><case-text>${name}</case-text></div>`).join('')}</div>
                <div class="clear"><case-text w="54">Clear Recents</case-text></div>
            </div>
            <hr>
            <div class="nav">
                ${nav.map(([icon, label, w]) => `<div class="${label === 'Accounts' ? 'on' : ''}"><case-icon name="${icon}"></case-icon><case-text w="${w}">${label}</case-text></div>`).join('')}
            </div>
            <div class="tools">
                ${['target', 'diary', 'pinnote', 'calstop', 'cal7'].map(icon => `<case-icon name="${icon}"></case-icon>`).join('')}
                <case-icon name="dots" size="16" style="margin-top:-2px"></case-icon>
            </div>
        `;
    }
}
customElements.define('side-panel', SidePanel);

class AccountsGrid extends HTMLElement {
    constructor() {
        super();
        this.attachShadow({ mode: 'open' });
    }

    connectedCallback() {
        const MB = 'Margaret Buchanan', GB = 'George Blair', BD = 'Becca Duncan', BH = 'Bill Howie';
        const partners = [MB, GB, BD, BH, MB, BH, MB, MB, 'Carol Edwards', MB, 'Finlay Park', MB, MB, MB, BD, BH, GB, MB, GB, MB, MB, BH];
        const numbers = { 14: 'NS124578M', 17: 'JP098765A' };

        this.shadowRoot.innerHTML = `
            <style>
                :host {
                    display: block;
                    flex: 1;
                    height: 543px;
                    background: #f8f8f8;
                }
                .search { display: flex; align-items: center; justify-content: flex-end; height: 20px; padding: 9px 14px 0 0; }
                .go { display: flex; align-items: center; gap: 13px; box-sizing: border-box; width: 67px; height: 19px; padding-left: 3px; margin: 0 7px 0 12px; background: #fdfdfd; border: 1px solid #b4b4b4; }
                .links { display: flex; justify-content: flex-end; height: 21px; line-height: 23px; padding-right: 57px; color: #3591c8; }
                .links case-text { text-decoration: underline; }
                .grid { box-sizing: border-box; width: 1032px; height: 491px; border: 1px solid #b0b0b0; background: #fff; }
                .find { display: flex; align-items: center; justify-content: flex-end; gap: 4px; height: 25px; padding-right: 2px; background: #f0f0f0; border-bottom: 1px solid #c4c4c4; }
                .find icon-button { width: 18px; height: 16px; color: #888; }
                .entry { box-sizing: border-box; width: 200px; height: 16px; padding-left: 29px; border: 1px solid #b4b4b4; background: #fff; line-height: 15px; color: #777; }
                .cols { display: grid; grid-template-columns: 821px 134px 1fr; }
                .th { height: 17px; line-height: 18px; background: #f6f6f6; border-bottom: 1px solid #b5b5b5; color: #777; }
                .th > :nth-child(3) { border-left: 1px solid #b5b5b5; }
                .data { display: flex; height: 373px; }
                .rows { width: 1017px; overflow: hidden; }
                .row { box-sizing: border-box; height: 16.800px; line-height: 17px; border-bottom: 1px solid #d2d2d2; }
                .row > :nth-child(3) { border-left: 1px solid #d2d2d2; }
                .cols > :nth-child(3) { padding-left: 2px; }
                .bar { display: flex; flex-direction: column; justify-content: space-between; width: 13px; background: #ececec; }
                .bar div, .hbar div { display: flex; align-items: center; justify-content: center; background: #fff; border: 1px solid #bbb; box-sizing: border-box; }
                .bar div { height: 13px; }
                .bar .thumb { height: 16px; margin-bottom: 248px; }
                .count { height: 29px; padding-left: 8px; line-height: 29px; }
                .hbar { display: flex; height: 13px; background: #ececec; }
                .hbar div { width: 12px; }
                .hbar .thumb { width: 594px; }
                .filter { display: flex; align-items: center; height: 28px; padding: 2px 11px 0 10px; background: #f0f0f0; }
                .check { display: flex; width: 9px; height: 9px; align-items: center; justify-content: center; border: 1px solid #aaa; background: #fff; margin: 0 1px 0 8px; }
            </style>
            <div class="search">
                <text-field width="200" combo></text-field>
                <div class="go"><case-icon name="lens" size="11"></case-icon><case-text w="27">Search</case-text></div>
                <case-icon name="user"></case-icon>
                <case-icon name="lens" size="12" style="margin-left:11px"></case-icon>
            </div>
            <div class="links">
                ${[4, 5, 6, 7, 8, 9].map(n => `<case-text w="5" style="margin-left:3px">${n}</case-text>`).join('')}
                <case-text w="9" style="margin:0 12px 0 17px">All</case-text>
                <case-text w="67">Advanced Search</case-text>
            </div>
            <div class="grid">
                <div class="find">
                    <div class="entry"><case-text w="88">Enter text to search...</case-text></div>
                    <icon-button icon="hat" size="9"></icon-button><icon-button icon="vee" size="9"></icon-button>
                </div>
                <div class="cols th"><span></span><case-text w="49">N.I. Number</case-text><span><case-text w="28">Partner</case-text></span></div>
                <div class="data">
                    <div class="rows">
                        ${partners.map((name, i) => `<div class="cols row"><span></span><span><case-text>${numbers[i] || ''}</case-text></span><span><case-text>${name}</case-text></span></div>`).join('')}
                    </div>
                    <div class="bar">
                        <div><case-icon name="up" size="7"></case-icon></div>
                        <div class="thumb"></div>
                        <div><case-icon name="down" size="7"></case-icon></div>
                    </div>
                </div>
                <div class="count"><case-text w="80">475 Accounts Shown</case-text></div>
                <div class="hbar"><div><case-icon name="left" size="7"></case-icon></div><div class="thumb"></div><div style="margin-left:auto"><case-icon name="right" size="7"></case-icon></div></div>
                <div class="filter">
                    <case-icon name="close" size="8"></case-icon>
                    <div class="check"><case-icon name="tick" size="8"></case-icon></div>
                    <case-text w="115">Not Is null or empty([Source])</case-text>
                    <case-text w="36" style="margin-left:auto">Edit Filter</case-text>
                </div>
            </div>
        `;
    }
}
customElements.define('accounts-grid', AccountsGrid);

class TaskBar extends HTMLElement {
    constructor() {
        super();
        this.attachShadow({ mode: 'open' });
    }

    connectedCallback() {
        const items = [['win', 13], ['findw', 13], ['taskview', 16], ['ie', 19], ['folder', 19, 1], ['caseround', 20, 1], ['eraserpad', 18, 1],
            ['pdf', 17, 1], ['outmail', 20, 1], ['caseround', 20, 2], ['edge', 19, 1], ['orb', 19, 1]];
        this.shadowRoot.innerHTML = `
            <style>
                :host { display: flex; height: 31px; background: #0b171c; color: #fff; }
                .item { display: flex; align-items: center; justify-content: center; box-sizing: border-box; width: 39.200px; height: 31px; padding-bottom: 1px; }
                .open { background: linear-gradient(#76b9ed, #76b9ed) center bottom / 32px 2px no-repeat; }
                .current { background: linear-gradient(#76b9ed, #76b9ed) center bottom / 100% 2px no-repeat #3a474d; }
                .tray { display: flex; align-items: center; gap: 6px; margin-left: auto; }
                .time { width: 46px; margin: -1px 13px 0 3px; text-align: center; line-height: 14px; font-size: 9.800px; font-family: "Open Sans", sans-serif; }
            </style>
            ${items.map(([icon, size, state]) => `<div class="item ${['', 'open', 'current'][state || 0]}"><case-icon name="${icon}" size="${size}"></case-icon></div>`).join('')}
            <div class="tray">
                <case-icon name="hat" size="9"></case-icon>
                <case-icon name="speaker" size="14"></case-icon>
                <case-icon name="cloud" size="13"></case-icon>
                <case-icon name="screen" size="13"></case-icon>
                <div class="time"><case-text w="20">15:29</case-text><case-text w="46">25/07/2025</case-text></div>
                <case-icon name="chat" size="14" style="margin-right:15px"></case-icon>
            </div>
        `;
    }
}
customElements.define('task-bar', TaskBar);

class ScreenRecorder extends HTMLElement {
    constructor() {
        super();
        this.attachShadow({ mode: 'open' });
        this.shadowRoot.innerHTML = `
            <style>
                :host {
                    display: flex;
                    flex-direction: column;
                    align-items: center;
                    box-sizing: border-box;
                    width: 46px;
                    height: 100px;
                    padding-top: 7px;
                    border-radius: 17px;
                    background: #23272b;
                    color: #fff;
                    font: bold 10px/12px "Open Sans", sans-serif;
                }
                .stop { display: flex; flex: none; align-items: center; justify-content: center; width: 32px; height: 32px; border-radius: 11px; background: #f0513f; margin-bottom: 8px; }
                .stop i { width: 14px; height: 14px; border-radius: 2px; background: #fff; }
                .pause { display: flex; gap: 3px; margin-top: 11px; }
                .pause i { width: 5px; height: 14px; border-radius: 2px; background: #fff; }
            </style>
            <div class="stop"><i></i></div>
            <case-text w="22">1:16</case-text>
            <div class="pause"><i></i><i></i></div>
        `;
    }
}
customElements.define('screen-recorder', ScreenRecorder);

class CaseDesktop extends HTMLElement {
    constructor() {
        super();
        this.attachShadow({ mode: 'open' });
    }

    connectedCallback() {
        const tabs = [['cols', 'Dashboards', 58], ['notebook', 'Notebooks', 53], ['leads', 'Leads', 29], ['card', 'Accounts', 46], ['target', 'AML Risk Centre', 78],
            ['diary', 'Events &amp; Court Diary', 104], ['pinnote', 'Notes &amp; K-Base', 74], ['clock', 'Time Recording', 76], ['cal7', 'Events Calendars', 84],
            ['flow', 'Workflows', 51], ['vault', 'Vault', 24], ['execu', 'Executry', 44], ['help', 'Help', 21], ['find', 'Search', 33]];

        this.shadowRoot.innerHTML = `
            <style>
                :host { display: block; width: 1280px; height: 720px; position: relative; background: #f0f0f0; overflow: hidden; }
                .title { display: flex; align-items: center; height: 29px; background: #1873ba; color: #b9d7ee; position: relative; }
                .sel { display: flex; align-items: center; justify-content: center; width: 19px; height: 19px; background: #fff; margin: 0 3px 0 4px; }
                .dot { position: absolute; right: 4px; top: 3px; width: 6px; height: 6px; border-radius: 3px; background: #d8a03c; }
                .faint { color: #5d9ed2; }
                .tabs { display: flex; gap: 10.500px; height: 23px; padding: 2px 0 0 12px; box-sizing: border-box; }
                .ribbon { display: flex; height: 73px; border-bottom: 1px solid #d4d4d4; box-sizing: border-box; }
                .main { display: flex; height: 543px; }
                .status { display: flex; align-items: center; height: 21px; padding-left: 7px; background: #f0f0f0; border-top: 1px solid #dcdcdc; box-sizing: border-box; }
                .blue { color: #2a12d0; font-weight: bold; }
                .green { color: #1d961d; font-weight: bold; margin: 0 9px 0 3px; }
                client-window { position: absolute; left: 208px; top: 86px; }
                screen-recorder { position: absolute; left: 13px; top: 159px; }
                .glow { position: absolute; left: 549px; top: 160px; width: 26px; height: 26px; border-radius: 50%; background: radial-gradient(rgba(250, 225, 120, .6), rgba(250, 225, 120, 0) 70%); }
                .cursor { position: absolute; left: 559px; top: 171px; }
            </style>
            <div class="title">
                <case-icon name="app" size="13" style="margin-left:7px"></case-icon>
                <case-icon name="shapes" size="12" style="margin-left:9px"></case-icon>
                <case-icon name="vee" size="6" style="margin-left:3px;color:#fff"></case-icon>
                <case-icon name="sync" size="11" style="margin-left:7px"></case-icon>
                <div class="sel"><case-icon name="card"></case-icon></div>
                <case-icon name="brief" size="14"></case-icon>
                <case-icon name="xbox" size="11" style="margin-left:7px"></case-icon>
                <case-icon name="down" size="9" style="margin-left:12px;color:#fff"></case-icon>
                <case-text w="232" style="margin-left:375px">Blair &amp; Buchanan - Caseload for Steven Hill [DeveloperMode]</case-text>
                <case-icon name="ai" size="12" style="margin-left:290px"></case-icon>
                <case-icon name="tablew" size="13" style="margin-left:6px"></case-icon>
                <case-icon name="vee" size="6" style="margin-left:3px;color:#fff"></case-icon>
                <case-icon name="horn" size="13" style="margin-left:6px"></case-icon>
                <case-icon name="clip" size="12" style="margin-left:8px"></case-icon>
                <case-icon class="faint" name="ribopt" size="10" style="margin-left:18px"></case-icon>
                <case-icon class="faint" name="min" size="9" style="margin-left:29px"></case-icon>
                <case-icon class="faint" name="restore" size="9" style="margin-left:30px"></case-icon>
                <case-icon name="close" size="9" style="margin-left:29px"></case-icon>
                <div class="dot"></div>
            </div>
            <div class="tabs">
                <case-icon name="menu" size="12" style="margin-top:4px"></case-icon>
                <case-icon name="down" size="6" style="margin:7px 8px 0 -11px"></case-icon>
                <ribbon-tab label="Home" w="30"></ribbon-tab>
                ${tabs.map(([icon, label, w]) => `<ribbon-tab icon="${icon}" label="${label}" w="${w}" ${label === 'Accounts' ? 'active' : ''}></ribbon-tab>`).join('')}
            </div>
            <div class="ribbon">
                <ribbon-group width="60"><ribbon-button icon="dash" size="24" width="58" label="Dashboards"></ribbon-button></ribbon-group>
                <ribbon-group width="243" caption="Actions">
                    <ribbon-button icon="page" size="25" width="38" label="New" drop></ribbon-button>
                    <ribbon-button icon="refresh" width="32" label="Refresh"></ribbon-button>
                    <ribbon-button icon="ai" width="46" label="AI Legal|Assistant"></ribbon-button>
                    <ribbon-button icon="shapes" size="25" width="30" label="Add-ins" drop></ribbon-button>
                    <ribbon-button icon="printer" size="25" width="44"></ribbon-button>
                    <ribbon-button icon="outlook" width="44"></ribbon-button>
                </ribbon-group>
                <ribbon-group width="136">
                    <ribbon-button icon="card" width="47" active style="margin-left:3px"></ribbon-button>
                    <ribbon-button icon="brief" size="24" width="46"></ribbon-button>
                    <ribbon-button icon="person" size="24" width="36"></ribbon-button>
                </ribbon-group>
                <ribbon-group width="187">
                    <ribbon-button icon="card" width="46"></ribbon-button>
                    <ribbon-button icon="brief" size="24" width="38"></ribbon-button>
                    <ribbon-button icon="clock" size="24" width="58"></ribbon-button>
                    <ribbon-button icon="clock" size="24" width="38"></ribbon-button>
                </ribbon-group>
                <ribbon-group width="94">
                    <ribbon-button icon="listblue" size="24" width="38"></ribbon-button>
                    <ribbon-button icon="tag" size="23" width="50"></ribbon-button>
                </ribbon-group>
                <ribbon-group width="179">
                    <ribbon-button icon="boxtag" size="25" width="38"></ribbon-button>
                    <ribbon-button icon="redbook" size="25" width="38"></ribbon-button>
                    <ribbon-button icon="bluebook" size="25" width="46"></ribbon-button>
                    <ribbon-button icon="chart" size="24" width="50"></ribbon-button>
                </ribbon-group>
                <ribbon-group width="57"><ribbon-button icon="db" size="25" width="54"></ribbon-button></ribbon-group>
                <ribbon-group width="211" caption="Integrations">
                    <ribbon-button icon="mb" size="22" width="42"></ribbon-button>
                    <ribbon-button icon="cross" width="40"></ribbon-button>
                    <ribbon-button icon="star8" size="24" width="64" label="The Scottish|Papers"></ribbon-button>
                    <ribbon-button icon="registers" size="25" width="54" label="Registers of|Scotland Cases"></ribbon-button>
                </ribbon-group>
                <ribbon-group width="40" caption="Exit"><ribbon-button icon="exit" size="22" width="38" label="Exit"></ribbon-button></ribbon-group>
                <case-icon name="hat" size="8" style="margin:60px 4px 0 auto"></case-icon>
            </div>
            <div class="main">
                <side-panel></side-panel>
                <accounts-grid></accounts-grid>
            </div>
            <div class="status">
                <case-text class="blue" w="48">Steven Hill</case-text>
                <case-text w="85" style="margin-left:12px">2365 Clients Searched</case-text>
                <case-text w="72" style="margin-left:389px">Accounting Period:</case-text><case-text class="green" w="36">2019.04</case-text>
                <case-text w="44">Work Date:</case-text><case-text class="green" w="67">Fri 5 April 2019</case-text>
                <case-text w="38">Daybook:</case-text><case-text class="green" w="146">'05/04/2019 by CALLUMB' (Open)</case-text>
                <case-text w="70" style="margin-left:32px">Blair &amp; Buchanan -</case-text>
                <case-text w="188" style="margin-left:3px;font-weight:bold">Caseload 5.115.87.3686 [DeveloperMode]</case-text>
            </div>
            <task-bar></task-bar>
            <client-window></client-window>
            <screen-recorder></screen-recorder>
            <div class="glow"></div>
            <case-icon class="cursor" name="cursor" size="17"></case-icon>
        `;
    }
}
customElements.define('case-desktop', CaseDesktop);
</script>
</body>
</html>
